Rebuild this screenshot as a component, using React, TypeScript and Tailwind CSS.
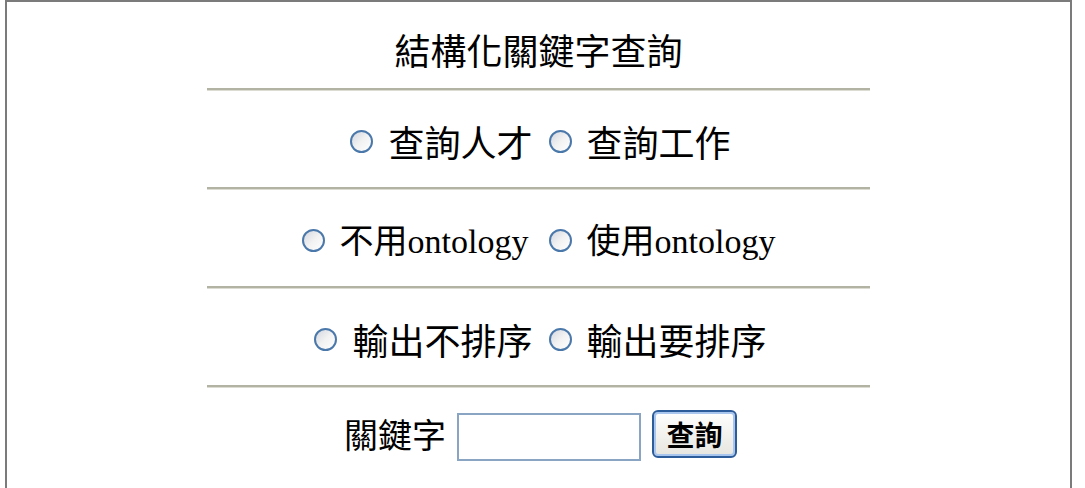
import { useState } from "react";

const cjk = '"Noto Sans CJK TC", "Liberation Serif", serif';
const latin = '"Liberation Serif", "Noto Sans CJK TC", serif';

function Radio({ checked }: { checked: boolean }) {
  return (
    <span className="inline-flex w-[23px] h-[23px] shrink-0 items-center justify-center rounded-full border-2 border-[#4a78aa] bg-gradient-to-br from-[#d3d7df] via-[#f2f2f2] to-white cursor-pointer">
      {checked && <span className="w-[8px] h-[8px] rounded-full bg-[#2f8a2f]" />}
    </span>
  );
}

function Opcao({
  checked,
  onClick,
  children,
}: {
  checked: boolean;
  onClick: () => void;
  children: React.ReactNode;
}) {
  return (
    <label className="flex items-center gap-[15px] cursor-pointer" onClick={onClick}>
      <Radio checked={checked} />
      <span className="leading-none">{children}</span>
    </label>
  );
}

function Linha() {
  return <div className="w-[663px] h-[3px] border-t-2 border-b border-t-[#b3b3a4] border-b-[#dcdcd2]" />;
}

export default function App() {
  const [tipo, setTipo] = useState("");
  const [onto, setOnto] = useState("");
  const [ordem, setOrdem] = useState("");
  const [palavra, setPalavra] = useState("");

  return (
    <div className="bg-white w-[1085px] h-[488px] overflow-hidden">
      <div
        className="ml-[5px] w-[1067px] h-[520px] border-2 border-b-0 border-[#7b7b7b] flex flex-col items-center text-black"
        style={{ fontFamily: cjk }}
      >
        <div className="h-[86px] flex items-center justify-center pt-[8px] text-[36px] leading-none">
          結構化關鍵字查詢
        </div>
        <Linha />

        <div className="h-[96px] flex items-center gap-[16px] pt-[4px] pl-[4px] text-[36px]">
          <Opcao checked={tipo === "pessoa"} onClick={() => setTipo("pessoa")}>
            查詢人才
          </Opcao>
          <Opcao checked={tipo === "vaga"} onClick={() => setTipo("vaga")}>
            查詢工作
          </Opcao>
        </div>
        <Linha />

        <div className="h-[96px] flex items-center gap-[20px] pt-[4px] text-[34px]">
          <Opcao checked={onto === "nao"} onClick={() => setOnto("nao")}>
            不用<span style={{ fontFamily: latin }}>ontology</span>
          </Opcao>
          <Opcao checked={onto === "sim"} onClick={() => setOnto("sim")}>
            使用<span style={{ fontFamily: latin }}>ontology</span>
          </Opcao>
        </div>
        <Linha />

        <div className="h-[96px] flex items-center gap-[16px] pt-[4px] pl-[4px] text-[36px]">
          <Opcao checked={ordem === "nao"} onClick={() => setOrdem("nao")}>
            輸出不排序
          </Opcao>
          <Opcao checked={ordem === "sim"} onClick={() => setOrdem("sim")}>
            輸出要排序
          </Opcao>
        </div>
        <Linha />

        <form
          className="h-[96px] flex items-center gap-[11px] pb-[4px] pl-[4px]"
          onSubmit={(e) => e.preventDefault()}
        >
          <span className="text-[34px] leading-none">關鍵字</span>
          <input
            type="text"
            value={palavra}
            onChange={(e) => setPalavra(e.target.value)}
            className="mt-[6px] w-[184px] h-[48px] border-2 border-[#8aa5c4] bg-white px-2 text-[24px] outline-none"
          />
          <button
            type="submit"
            className="w-[85px] h-[48px] rounded-[6px] border-2 border-[#2c5d9a] bg-gradient-to-b from-white to-[#e6e5de] shadow-[inset_0_0_0_2px_#a9c6ef] text-[28px] font-semibold leading-none"
          >
            查詢
          </button>
        </form>
      </div>
    </div>
  );
}
